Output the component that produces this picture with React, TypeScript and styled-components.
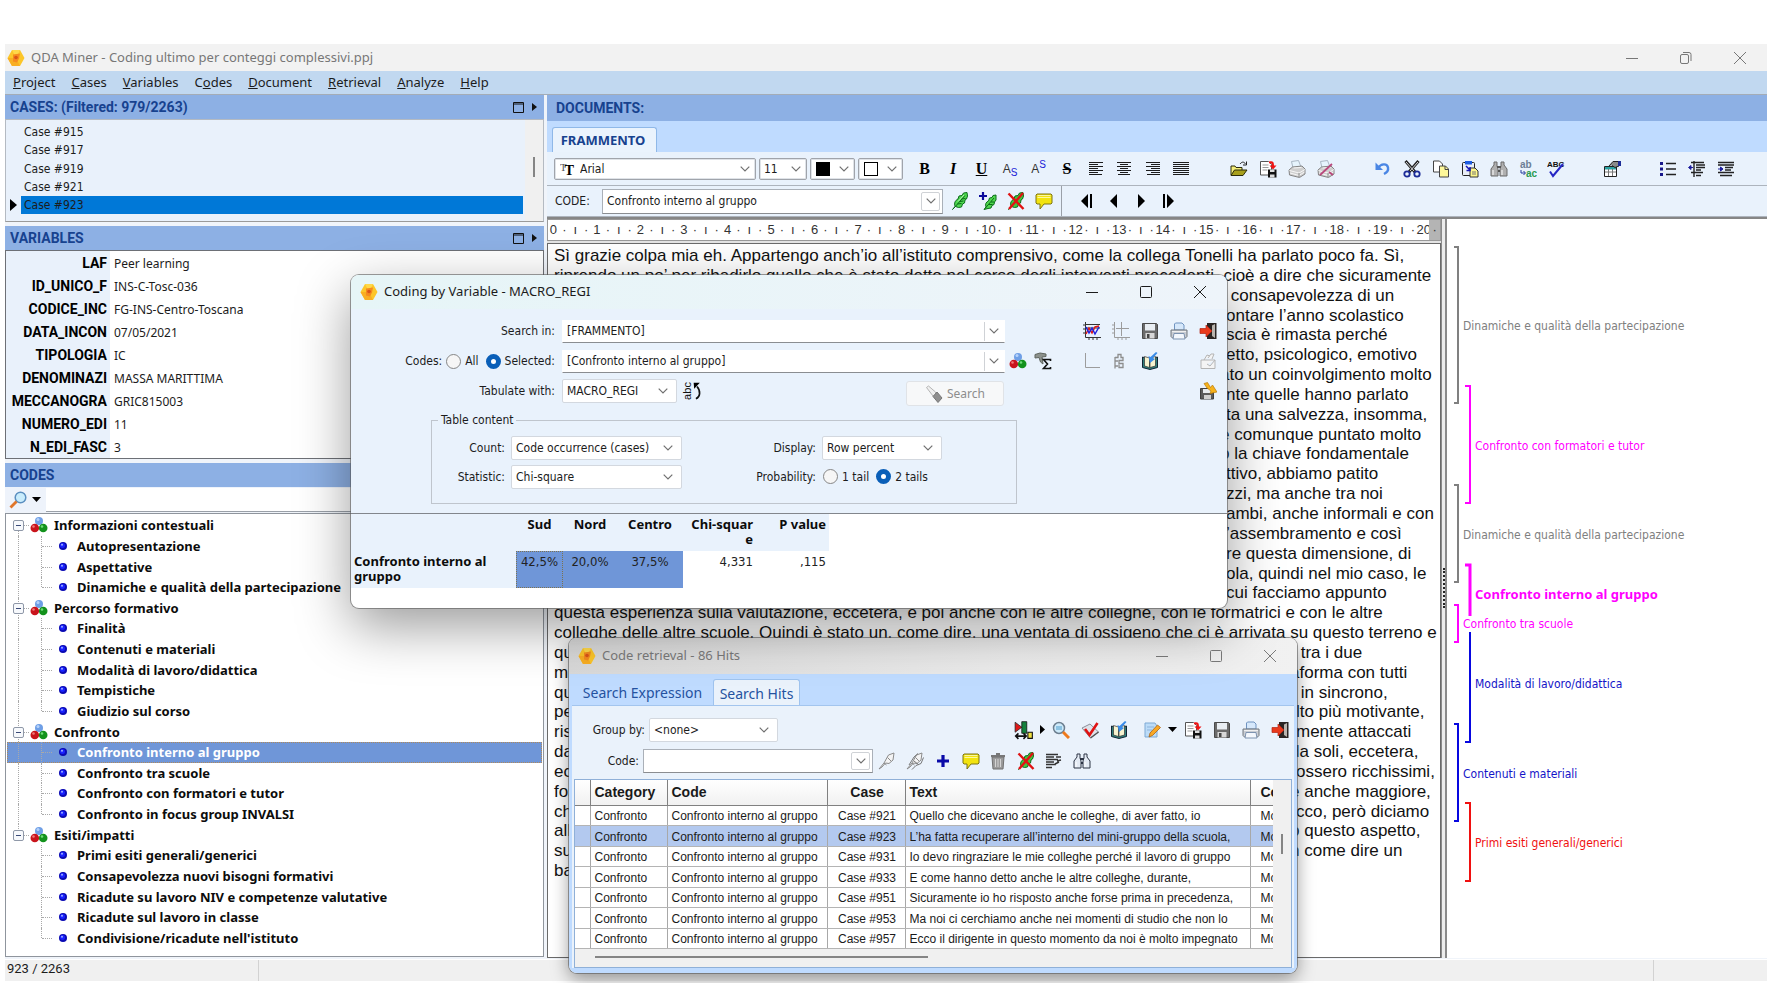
import React from 'react';
import styled, { createGlobalStyle, css } from 'styled-components';

const ui = '"DejaVu Sans Condensed", "DejaVu Sans", sans-serif';
const humanist = '"Noto Sans", "Open Sans", sans-serif';
const arial = '"Liberation Sans", Arial, sans-serif';
const grotesk = 'Roboto, "Liberation Sans", sans-serif';

const GlobalStyle = createGlobalStyle`
  * { box-sizing: border-box; }
  body { margin: 0; background: #fff; font: 12px/16px ${ui}; color: #1c1c1c; }
  button, input, select { font: inherit; color: inherit; margin: 0; }
  button { border: 0; padding: 0; background: none; }
  ul { list-style: none; margin: 0; padding: 0; }
`;

/* ---------- icons ---------- */

const Svg = ({ s = 18, children }: { s?: number; children: React.ReactNode }) => (
  <svg width={s} height={s} viewBox="0 0 18 18" fill="none" aria-hidden="true">{children}</svg>
);

const Logo = () => (
  <Svg>
    <path d="M5 1h8l4.500 8-4.500 8H5L.5 9z" fill="#fcc629" />
    <path d="M5 1h8l-4 8z" fill="#ffd84a" />
    <path d="M.5 9 5 17h8l-4-8z" fill="#f9ae22" />
    <path d="M6 5.500l7-1-1 5-2 4-4-1z" fill="#f58a1f" />
    <circle cx="9" cy="8.500" r="1.800" fill="#d9541a" />
  </Svg>
);
const Balls = () => (
  <Svg>
    <circle cx="9" cy="5" r="4" fill="#6f9fe6" /><circle cx="8" cy="3.500" r="1.500" fill="#b5d2fa" />
    <circle cx="4.800" cy="12" r="4.300" fill="#c9141c" /><circle cx="3.500" cy="10.500" r="1.300" fill="#f07a7a" />
    <circle cx="13.200" cy="12" r="4.300" fill="#13921c" /><circle cx="12" cy="10.500" r="1.300" fill="#6fdc78" />
  </Svg>
);
const Node = () => (
  <svg width="8" height="8" viewBox="0 0 8 8" aria-hidden="true">
    <circle cx="4" cy="4" r="4" fill="#0a0ab4" /><circle cx="3.500" cy="3.500" r="2.500" fill="#1a22ff" /><circle cx="3" cy="2.800" r="1" fill="#9fb0ff" />
  </svg>
);
const quill = 'M1.500 17.500 4 14.500C3 11 4 8.500 7 7l1-3 3-.500L12.500 1 16 .5l.5 3.500-1 3-1.500 1-.5 3-2 1-1 3-3 .5-3-1z';
const Feather = () => (
  <Svg>
    <path d={quill} fill="#4fd84f" stroke="#0b6d1a" />
    <path d="M3 16 14 3.500M6.500 12l4-.5M8.500 9.500l4-.5M10.500 7l4-.5" stroke="#0a6a18" />
    <path d="M7 9.500 13 3" stroke="#b6f5b0" />
  </Svg>
);
const FeatherPlus = () => (
  <Svg>
    <path d="M5 17.500 7 15c-1-3 0-5 2.500-6l1-3 2.500-.500L14 3.500l3-.5v5l-1.500 2-.5 2.500-2 1-1 2.500-3 .5z" fill="#4fd84f" stroke="#0b6d1a" />
    <path d="M6 16.500 15 6M10 12.500h3.500M12 10h3" stroke="#0a6a18" /><path d="M4 0v8M0 4h8" stroke="#0a0a9c" strokeWidth="2.200" />
  </Svg>
);
const FeatherX = () => (
  <Svg>
    <path d={quill} fill="#3fc83f" stroke="#0b6d1a" /><path d="M3 16 14 3.500" stroke="#0a6a18" />
    <path d="M1.500 1.500 16.500 17M16 1 2 17" stroke="#e01212" strokeWidth="2.400" />
  </Svg>
);
const Pen = ({ double }: { double?: boolean }) => (
  <Svg>
    <path d="M1 17l5-6 4.500-8L16 1l-1 7-4 3.500L7.500 11 4 15z" fill="#f4f4f4" stroke="#8b8b8b" />
    <path d="M9.500 5.500 13 9M6 11l2.500 2" stroke="#8b8b8b" />
    {double && <path d="M3 13l5-8 4-3.500M6 17.500l4-4 5-2 2.500-6M8 9l5 4" stroke="#777" />}
  </Svg>
);
const Bubble = () => (
  <Svg><path d="M2 2h14l1 1v8l-1 1H9l-4 5v-5H2l-1-1V3z" fill="#f2e30f" stroke="#7c7414" /><path d="M2.500 3.500h13M2.500 5.500h13" stroke="#fbf7a0" /></Svg>
);
const Align = ({ rows }: { rows: [number, number][] }) => (
  <Svg>{rows.map(([x, w], i) => <path key={i} d={`M${x} ${2.5 + i * 2}h${w}`} stroke="#1c1c1c" />)}</Svg>
);
const alignRows: Record<string, [number, number][]> = {
  left: [[2, 14], [2, 9], [2, 14], [2, 9], [2, 14], [2, 9], [2, 13]],
  center: [[2, 14], [5, 8], [2, 14], [5, 8], [2, 14], [5, 8], [3, 12]],
  right: [[2, 14], [7, 9], [2, 14], [7, 9], [2, 14], [7, 9], [3, 13]],
  justify: [[1, 16], [1, 16], [1, 16], [1, 16], [1, 16], [1, 16], [1, 16]],
};
const Open = () => (
  <Svg>
    <path d="M1 15V6h4l1 1.500h6V10" fill="#f4ee7a" stroke="#2b2b0a" />
    <path d="M1 15.500 4.500 10H17l-4 5.500z" fill="#a8a01c" stroke="#2b2b0a" /><path d="M10 4c2-2.500 4-2.500 5.500 0M16.500 1.500V5H13" stroke="#222" />
  </Svg>
);
const Export = () => (
  <Svg>
    <path d="M1.500 1.500h8l3 3V15h-11z" fill="#fff" stroke="#555" /><path d="M3.500 5h6M3.500 7.500h6M3.500 10h5" stroke="#999" />
    <path d="M10 1.500c4-1 5 .5 5 4h2.500L14 9.500 10.500 5.500H13c0-2-1-2.500-3-2z" fill="#f01414" />
    <path d="M9 9.500h8.500v8H9z" fill="#111" /><path d="M11 9.500h4.500V12H11zM11 14.500h4.500v3H11z" fill="#ddd" />
  </Svg>
);
const Printer = ({ blue, crossed }: { blue?: boolean; crossed?: boolean }) => (
  <Svg>
    {blue ? (
      <>
        <path d="M4.500 8V2l1-1H12l2 2v5z" fill="#d6e8fb" stroke="#6f93c0" />
        <path d="M1 8h16v6.500l-1.500 1.500h-13L1 14.500z" fill="#c9cdd3" stroke="#73787f" />
        <path d="M4 11.500h10L15 17H3z" fill="#f3f7fc" stroke="#7d93b0" /><path d="M2 9.500h14" stroke="#f0f0f0" />
      </>
    ) : (
      <>
        <path d="M5 8 3.500 1.500 10.500.5 13 7z" fill="#e6f4fd" stroke="#a9b7c4" />
        <path d="M1 10 4.500 7 14 6l3 3v5l-5.500 3.500L1.500 15z" fill="#cfcfcf" stroke="#858585" />
        <path d="M1.500 10.500 11 13l6-3.500M2 13l9 2.500L16.500 12M5.500 8l8-.5" stroke="#f7f7f7" /><path d="M11 13v4" stroke="#8a8a8a" />
      </>
    )}
    {crossed && <path d="M3 15 15 4M12 12l4 3" stroke="#b8487c" strokeWidth="1.800" />}
  </Svg>
);
const Undo = () => (
  <Svg>
    <path d="M4 8C7 3.500 13 3 14 7.500c.6 3-1 5-4 6.500" stroke="#4a86e4" strokeWidth="2.400" /><path d="M1.500 2.500V10H9z" fill="#4a86e4" />
  </Svg>
);
const Scissors = () => (
  <Svg>
    <path d="M2.500 1 12 12M15.500 1 6 12" stroke="#222" strokeWidth="3" /><path d="M3 2l8 9M15 2l-8 9" stroke="#d6d6d6" />
    <circle cx="4" cy="14" r="2.700" stroke="#1c2c98" strokeWidth="1.800" /><circle cx="14" cy="14" r="2.700" stroke="#1c2c98" strokeWidth="1.800" />
  </Svg>
);
const Copy = () => (
  <Svg>
    <path d="M1.500 1h6l3 3v8h-9z" fill="#fff" stroke="#444" /><path d="M7.500 6h6l3 3v8h-9z" fill="#fdf89a" stroke="#444" /><path d="M13 6v3.500h3.500" stroke="#444" />
  </Svg>
);
const Paste = () => (
  <Svg>
    <rect x="1.500" y="2.500" width="12" height="13" rx="1" fill="#e9eef6" stroke="#222" /><path d="M4 1h7v3.500H4z" fill="#1d5ce0" />
    <path d="M9 8h5l3 3v6H9z" fill="#fdf78a" stroke="#333" /><path d="M5 6l4 4M9 7v3.500H5.500" stroke="#1212b4" strokeWidth="1.500" /><path d="M11 12h4M11 14h4" stroke="#777" />
  </Svg>
);
const Binoculars = ({ dark }: { dark?: boolean }) => (
  <Svg>
    <path d="M4 2h3v4l1 3v7H1V9l3-4zM14 2h-3v4l-1 3v7h7V9l-3-4z" fill={dark ? '#e4ebf4' : '#b0b0b0'} stroke={dark ? '#2c3444' : '#6a6a6a'} />
    <path d="M3 10v5M12 10v5" stroke="#fff" /><path d="M7 7h4M8 11h2" stroke={dark ? '#2c3444' : '#555'} strokeWidth="2" />
  </Svg>
);
const glyph = { fontFamily: 'Liberation Sans', fontWeight: 700 } as const;
const Replace = () => (
  <Svg>
    <text x="1" y="8" fontSize="10" fill="#6d7f96" {...glyph}>ab</text><path d="M2 10v3h4M4.500 11l2 2-2 2" stroke="#22389c" />
    <text x="7" y="17" fontSize="10" fill="#2a9a50" {...glyph}>ac</text>
  </Svg>
);
const Spell = () => (
  <Svg>
    <text x="0" y="7" fontSize="8" fill="#111" {...glyph}>ABC</text><path d="M3 11.500 6 16 16 4" stroke="#2626c4" strokeWidth="2" />
  </Svg>
);
const Props = () => (
  <Svg>
    <path d="M1.500 6.500h12v10h-12z" fill="#fff" stroke="#222" /><path d="M2 7h11v2.500H2z" fill="#2aa0a0" /><path d="M2 12h11M5.500 9v7M9.500 9v7" stroke="#777" />
    <path d="M6 6l4-4.500h6V6l-4 1.500-3-2" fill="#8a8a8a" stroke="#222" /><path d="M15 1h3v5h-3z" fill="#1c2c98" />
  </Svg>
);
const Bullets = () => (
  <Svg><path d="M1 2h3v3H1zM1 7.500h3v3H1zM1 13h3v3H1z" fill="#18188c" /><path d="M7 3.500h10M7 9h10M7 14.500h10" stroke="#222" strokeWidth="1.300" /></Svg>
);
const Dent = ({ inward }: { inward?: boolean }) => (
  <Svg>
    <path d={inward ? 'M1 2.500h16M1 5h16M8 7.500h8M8 10h6M1 12.500h16M3 15.500h12' : 'M3 2.500h13M8 5h9M8 7.500h9M8 10h5M3 12.500h12M8 15.500h5M6 1v16'} stroke="#222" strokeWidth="1.400" />
    <path d={inward ? 'M1 9h3M3.500 7l2.500 2-2.500 2z' : 'M1 7.500h4M3 5.500.5 7.500l2.500 2z'} stroke="#1c1c9c" fill="#1c1c9c" />
  </Svg>
);
const Nav = ({ d }: { d: string }) => <Svg><path d={d} fill="#000" /></Svg>;
const Caret = () => <svg width="9" height="5" viewBox="0 0 9 5" aria-hidden="true"><path d="M0 0h9L4.500 5z" fill="#000" /></svg>;
const RightCaret = () => <svg width="5" height="9" viewBox="0 0 5 9" aria-hidden="true"><path d="M0 0v9l5-4.500z" fill="#000" /></svg>;
const Chevron = () => <svg width="10" height="6" viewBox="0 0 10 6" fill="none" aria-hidden="true"><path d="M.7.7 5 5 9.300.7" stroke="#707070" strokeWidth="1.200" /></svg>;
const Chart = () => (
  <Svg>
    <path d="M2.500 0v15.500H18M0 3h2M0 7h2M0 11h2M6 16v2M10 16v2M14 16v2M3 2.500h14M3 6h14" stroke="#333" />
    <path d="M3 12l3-6 3 5 3-6 4-1" stroke="#e01818" strokeWidth="1.500" /><path d="M3 5l3 6 3-5 3 6 4-7" stroke="#2222dc" strokeWidth="1.500" />
  </Svg>
);
const Axes = () => <Svg><path d="M2.500 0v15.500H18M0 3h2M0 7h2M0 11h2M6 16v2M10 16v2M14 16v2M4 6.500h13M9.500 0v14" stroke="#9c9c9c" /></Svg>;
const Corner = () => <Svg><path d="M2.500 1v14.500H17" stroke="#9c9c9c" /></Svg>;
const Dendro = () => <Svg><path d="M5 16.500V5M5 5.500h3v-3h3v3h2v3H9v3h4v4H9v-3M5 9h3M5 14h3" stroke="#8d8d8d" strokeWidth="1.300" /></Svg>;
const Disk = () => (
  <Svg>
    <path d="M1.500 1.500h14l1 1v14h-15z" fill="#6b6b6b" stroke="#4a4a4a" /><path d="M4 2h10v6.500H4z" fill="#e9eef3" /><path d="M4.500 11h9v5.500h-9z" fill="#d7d7d7" /><path d="M6 12h2.500v4H6z" fill="#444" />
  </Svg>
);
const Exit = () => (
  <Svg>
    <path d="M8 1h9.500v16H8z" fill="#2a2422" /><path d="M13 3.500l3-1.500v14L13 14z" fill="#b9b4ae" />
    <path d="M1 6.500h6V3l6 6-6 6v-3.500H1z" fill="#e93a1c" stroke="#b32412" strokeWidth=".7" />
  </Svg>
);
const Book = () => (
  <Svg>
    <path d="M1.500 5 8 7l8.500-2v10.500L9 17.500l-7.500-2z" fill="#2f7f7a" stroke="#123" /><path d="M3.500 4.500 8.500 6v9.500l-5-1.500zM9 6l5.500-1.500V14L9 15.500z" fill="#f7f3cf" stroke="#333" strokeWidth=".7" />
    <path d="M15 0 9.500 5l-2-1 1.500 7 5-4-2-1L16.500 1z" fill="#3a8ce8" />
  </Svg>
);
const Report = () => (
  <Svg><path d="M2 8h14v8.500H2zM5 8l3-5 3 1M9 6l3-4h3l-2 5M8 12l3 2 5-6" fill="#f4f4f4" stroke="#b4b4b4" /></Svg>
);
const DiskGo = () => (
  <Svg>
    <path d="M1.500 6.500h13v10.500h-13z" fill="#5b5b5b" stroke="#3f3f3f" /><path d="M4 7h8v4H4z" fill="#e8ecf0" /><path d="M5 13h7v4H5z" fill="#d0d0d0" />
    <path d="M5 1.500 8.500.500l3 5 2-2.500 4.500 7-7 1.500 1-2.500-4-3z" fill="#f6b21c" stroke="#b87a08" strokeWidth=".7" />
  </Svg>
);
const Sigma = () => (
  <Svg>
    <path d="M1 2.500 6 1l6 1v2.500L8 5l1 7-2.500-2L5 5.500 1 6z" fill="#8c918c" stroke="#5f655f" /><path d="M16.500 9V7.500H9.500l4 4.500-4 4.500h7V15" stroke="#111" strokeWidth="1.600" />
  </Svg>
);
const Rotate = () => (
  <Svg s={20}>
    <text transform="translate(8 17) rotate(-90)" fontSize="10" fill="#111" fontFamily="Liberation Sans">abc</text>
    <path d="M12.500 16c4-1.500 4.500-7 1-11" stroke="#111" strokeWidth="1.500" /><path d="M10.500 1.500h5.500l-5 5.500z" fill="#000" />
  </Svg>
);
const Torch = () => (
  <Svg><path d="M1.500 2.500 3.500 1l7 6 .5 4-3 0z" fill="#f0f0f0" stroke="#b4b4b4" /><path d="M8 11.500 12 7l5 6-4 4.500z" fill="#8f8f8f" stroke="#777" /></Svg>
);
const Filter = () => (
  <Svg s={20}>
    <path d="M1 2l6 4.500L1 11z" fill="#e01818" stroke="#222" strokeWidth=".7" /><path d="M7 1.500h4.500V12H7z" fill="#14803c" stroke="#111" strokeWidth=".7" />
    <path d="M2 14.500h8M4 12l-2.500 2.500L4 17M8.500 12l2.500 2.500L8.500 17" stroke="#111" strokeWidth="1.400" /><path d="M12.500 11h4v5.500h-4z" fill="#f0e040" stroke="#111" />
  </Svg>
);
const Lens = () => (
  <Svg>
    <circle cx="7" cy="7" r="5.500" fill="#cdeafa" stroke="#6d7f90" strokeWidth="1.500" /><path d="M4 6h6M4 8h6" stroke="#4a9ccc" /><path d="M11 11l6 6" stroke="#ee7a1c" strokeWidth="3" />
  </Svg>
);
const LensLeft = () => (
  <Svg><circle cx="11.500" cy="6.500" r="5.300" fill="#c9ecfc" stroke="#5b8fc0" strokeWidth="1.500" /><path d="M7.500 10.500 1.500 16.500" stroke="#e0762c" strokeWidth="2.800" /></Svg>
);
const Check = () => (
  <Svg>
    <path d="M1 7l8-4 8.500 8-8 6z" fill="#dfe2ea" stroke="#8b8f99" /><path d="M9.500 17l8-6" stroke="#555" strokeWidth="1.500" /><path d="M4 8l4.500 6L16.500 2" stroke="#e01212" strokeWidth="2.600" />
  </Svg>
);
const Edit = () => (
  <Svg>
    <path d="M2 2h10l2 3v11H2z" fill="#bcdcf8" stroke="#7faad4" /><path d="M4 6h7M4 9h5" stroke="#8db4dc" /><path d="M6 16l1-4 7.500-8 3 2.500-8 8z" fill="#f9a825" stroke="#a8661a" strokeWidth=".8" />
  </Svg>
);
const Trash = () => (
  <Svg><path d="M3 5h12l-1 12H4z" fill="#9b9b9b" stroke="#6f6f6f" /><path d="M2 4h14M7 2h4" stroke="#777" strokeWidth="2" /><path d="M6.500 7v8M9 7v8M11.500 7v8" stroke="#d4d4d4" /></Svg>
);
const Lines = () => (
  <Svg><path d="M1 2.500h12M1 5h8M1 7.500h12M1 10h8M1 12.500h10M1 15.500h6M11 5h5M12 9l4-1M10 12l4-2" stroke="#333" strokeWidth="1.500" /></Svg>
);
const Plus = () => <Svg><path d="M9 3v12M3 9h12" stroke="#0a0aa8" strokeWidth="3.200" /></Svg>;

/* ---------- shared pieces ---------- */

const CaptionBar = styled.header<{ $bg: string; $fg: string; $h: number; $inset: number }>`
  display: flex; align-items: center; height: ${p => p.$h}px; flex: none;
  padding-left: ${p => p.$inset}px; background: ${p => p.$bg}; color: ${p => p.$fg};
  font: 13px/18px ${humanist};
`;
const CaptionText = styled.span`flex: 1; padding: 0 0 2px 6px;`;
const CaptionButton = styled.button`
  width: 54px; height: 100%; display: grid; place-items: center; color: inherit;
`;
const WindowButtons = ({ restore }: { restore?: boolean }) => (
  <>
    <CaptionButton aria-label="Minimize"><svg width="12" height="12" stroke="currentColor"><path d="M0 6.500h12" /></svg></CaptionButton>
    <CaptionButton aria-label="Maximize">
      <svg width="12" height="12" stroke="currentColor" fill="none">
        {restore ? <><rect x=".5" y="2.500" width="8" height="9" rx="1.500" /><path d="M3 .5h6a2 2 0 0 1 2 2V9" /></> : <rect x=".5" y=".5" width="11" height="11" rx="1" />}
      </svg>
    </CaptionButton>
    <CaptionButton aria-label="Close"><svg width="12" height="12" stroke="currentColor"><path d="M0 0l12 12M12 0 0 12" /></svg></CaptionButton>
  </>
);
const IconButton = styled.button<{ $w?: number }>`
  flex: 0 0 ${p => p.$w ?? 29}px; height: 22px; display: grid; place-items: center;
`;
const SelectBox = styled.div<{ $w?: number; $h?: number; $framed?: boolean }>`
  position: relative; display: flex; align-items: center; height: ${p => p.$h ?? 24}px; min-width: 0;
  flex: ${p => (p.$w ? `0 0 ${p.$w}px` : '1')};
  background: #fff; border: 1px solid ${p => (p.$framed ? '#a0a4ab' : '#d3d8df')}; border-radius: 2px;
  ${p => p.$framed && css`box-shadow: inset 0 0 0 1px #dfe3e8;`}
  & > svg:last-child { position: absolute; right: ${p => (p.$framed ? 5 : 8)}px; pointer-events: none; }
`;
const SelectInput = styled.select`
  appearance: none; border: 0; background: transparent; flex: 1; min-width: 0; height: 100%; padding: 0 0 0 4px; outline: 0;
`;
const LeadIcon = styled.span`padding-left: 5px; display: flex; flex: none;`;
type PickProps = { label?: string; id?: string; value: string; w?: number; h?: number; framed?: boolean; lead?: React.ReactNode };
const Pick = ({ label, id, value, w, h, framed, lead }: PickProps) => (
  <SelectBox $w={w} $h={h} $framed={framed}>
    {lead && <LeadIcon>{lead}</LeadIcon>}
    <SelectInput id={id} aria-label={label}><option>{value}</option></SelectInput>
    <Chevron />
  </SelectBox>
);
const FieldBox = styled.div<{ $w: number; $h?: number; $boxed?: boolean }>`
  display: flex; flex: 0 0 ${p => p.$w}px; height: ${p => p.$h ?? 23}px; background: #fff;
  border: 1px solid ${p => (p.$boxed ? '#aab0b8' : '#fff')}; border-bottom-color: #8a8d91;
`;
const FieldInput = styled.input`flex: 1; min-width: 0; border: 0; padding: 0 4px; background: transparent; outline: 0;`;
const FieldDrop = styled.button<{ $boxed?: boolean }>`
  width: 19px; margin: 1px; display: grid; place-items: center; border-left: 1px solid #cfd2d6;
  ${p => p.$boxed && css`border: 1px solid #cfd2d6; border-radius: 2px; margin: 2px;`}
`;
const Combo = ({ id, value, w, h, boxed }: { id: string; value: string; w: number; h?: number; boxed?: boolean }) => (
  <FieldBox $w={w} $h={h} $boxed={boxed}>
    <FieldInput id={id} defaultValue={value} />
    <FieldDrop $boxed={boxed} type="button" aria-label="Show list"><Chevron /></FieldDrop>
  </FieldBox>
);
const RadioLabel = styled.label<{ $gap?: number }>`display: flex; align-items: center; gap: 4px; margin-left: ${p => p.$gap ?? 0}px;`;
const Radio = styled.input.attrs({ type: 'radio' })`
  appearance: none; width: 15px; height: 15px; margin: 0; border-radius: 50%; border: 1px solid #868686; background: #f6f6f6;
  &:checked { border: 5px solid #0a5fb8; background: #fff; }
`;

/* ---------- application frame ---------- */

const Page = styled.div`
  position: relative; display: flex; flex-direction: column; min-height: 100vh; min-width: 1300px; padding: 44px 5px 2px;
`;
const MenuBar = styled.nav`
  display: flex; gap: 16px; height: 24px; flex: none; padding-left: 8px; background: #c1d8f0; border-bottom: 1px solid #a4acb6;
`;
const MenuItem = styled.button`padding-bottom: 2px; font: 13px/20px ${humanist};`;
const Workspace = styled.main`
  flex: 1; display: grid; grid-template-columns: minmax(0, 539fr) 3px minmax(0, 1220fr); background: #f0f4fa;
`;
const Sidebar = styled.div`display: flex; flex-direction: column; gap: 4px; padding-bottom: 2px;`;
const Panel = styled.section<{ $grow?: boolean }>`
  display: flex; flex-direction: column; flex: ${p => (p.$grow ? '1' : 'none')};
`;
const PanelHead = styled.h2<{ $wide?: boolean }>`
  margin: 0; display: flex; align-items: center; flex: none;
  height: ${p => (p.$wide ? 26 : 24)}px; padding: 0 3px 0 ${p => (p.$wide ? 9 : 5)}px;
  background: #8db0e4; color: #17428f; font: 700 14px/18px ${grotesk};
`;
const HeadTools = styled.span`margin-left: auto; display: flex; align-items: center; gap: 3px;`;
const HeadButton = styled.button`display: grid; place-items: center; width: 13px; height: 16px;`;
const PanelTools = () => (
  <HeadTools>
    <HeadButton aria-label="Expand panel"><svg width="11" height="11" fill="none"><path d="M.5.500h10v10H.5zM0 2h11" stroke="#111" /></svg></HeadButton>
    <HeadButton aria-label="Panel menu"><svg width="5" height="8"><path d="M0 0v8l5-4z" fill="#111" /></svg></HeadButton>
  </HeadTools>
);
const ScrollTrack = styled.div<{ $top: number; $len: number }>`
  flex: 0 0 18px; background: #f0f0f0; display: flex; justify-content: center;
  &::after { content: ''; width: 2px; height: ${p => p.$len}px; margin-top: ${p => p.$top}px; background: #858585; }
`;

const CaseBox = styled.div`display: flex; height: 103px; background: #e9f1fb; border: 1px solid #b4bac2; border-bottom-color: #9a9a9a;`;
const CaseList = styled.ul`flex: 1; display: flex; flex-direction: column; padding: 3px 2px 7px 0;`;
const CaseItem = styled.li<{ $on?: boolean }>`
  flex: 1; display: flex; align-items: center; margin-left: 15px; padding-left: 3px; position: relative;
  ${p => p.$on && css`
    background: #0078d7;
    &::before { content: ''; position: absolute; left: -11px; border: 6px solid transparent; border-left: 7px solid #000; border-right: 0; }
  `}
`;

const VariableGrid = styled.dl`
  margin: 0; border: 1px solid #6d7076; display: grid; grid-template-columns: 104px 1fr; grid-auto-rows: 23px; background: #fff;
`;
const VarName = styled.dt`background: #e9f1fb; color: #000; text-align: right; padding-right: 3px; font: 700 14px/24px ${grotesk};`;
const VarValue = styled.dd`margin: 0; padding-left: 4px; font: 12px/25px ${humanist};`;

const CodeSearch = styled.div`display: flex; align-items: center; height: 25px; background: #eef3fb; padding-left: 2px;`;
const CodeSearchInput = styled.input`
  flex: 1; height: 24px; margin-left: 3px; border: 0; border-bottom: 1px solid #9aa0a8; background: #fff;
`;
const Tree = styled.ul`
  flex: 1; display: flex; flex-direction: column; margin-top: 1px; padding: 1px 0 8px 1px;
  border: 1px solid #8f959d; background: #fff; font: 700 13px/18px ${humanist}; color: #0c0c0c;
`;
const TreeItem = styled.li<{ $on?: boolean }>`
  flex: 1; display: flex; align-items: center; margin-right: 1px;
  ${p => p.$on && css`background: #6f96d8; color: #fff; outline: 1px dotted #b08a5a; outline-offset: -1px;`}
`;
const Rail = styled.span<{ $from?: string; $to?: string; $stub?: boolean }>`
  align-self: stretch; position: relative; flex: 0 0 23px;
  &::before {
    content: ''; position: absolute; left: 11px; top: ${p => p.$from ?? '0'}; bottom: ${p => p.$to ?? '0'};
    border-left: 1px dotted #a9a9a9; display: ${p => (p.$from || p.$to ? 'block' : 'none')};
  }
  &::after {
    content: ''; position: absolute; left: 12px; width: 10px; top: 50%; border-top: 1px dotted #a9a9a9;
    display: ${p => (p.$stub ? 'block' : 'none')};
  }
`;
const Toggle = styled.button`
  position: absolute; z-index: 1; left: 6px; top: calc(50% - 5px); width: 11px; height: 11px;
  border: 1px solid #8f98a8; border-radius: 2px; background: #f7f9fc;
  &::after { content: ''; position: absolute; left: 2px; right: 2px; top: 4px; height: 1px; background: #3a4a78; }
`;
const TreeText = styled.span<{ $gap: number }>`padding-left: ${p => p.$gap}px;`;
const NodeSlot = styled.span`display: flex; padding-left: 6px;`;

/* ---------- document pane ---------- */

const Documents = styled.div`grid-column: 3; display: flex; flex-direction: column;`;
const TabStrip = styled.div`display: flex; align-items: flex-end; height: 31px; flex: none; padding-left: 5px; background: #bfdbff;`;
const DocTab = styled.button`
  height: 25px; width: 105px; border: 1px solid #8fb8e8; border-bottom: 0; border-radius: 3px 3px 0 0; padding-right: 3px;
  background: #eaf3fd; color: #17428f; font: 700 13px/20px ${humanist};
`;
const ToolRow = styled.div<{ $h: number }>`
  display: flex; align-items: center; gap: 3px; flex: none; height: ${p => p.$h}px; padding-left: 7px;
  background: #e9f2fc; border-bottom: 1px solid #adb4bd;
`;
const ToolGroup = styled.div<{ $gap?: number }>`display: flex; margin-left: ${p => p.$gap ?? 0}px;`;
const Glyph = styled.span<{ $italic?: boolean; $line?: string }>`
  font: ${p => (p.$italic ? 'italic ' : '')}700 16px/18px "Liberation Serif", serif; color: #000;
  text-decoration: ${p => p.$line ?? 'none'};
`;
const Script = styled.span`
  font: 12px/18px "Liberation Sans", sans-serif; color: #333;
  sub, sup { font-size: 10px; line-height: 0; color: #2020d8; }
`;
const Swatch = styled.span<{ $fill: string }>`width: 14px; height: 14px; background: ${p => p.$fill}; border: 1px solid #000;`;
const CodeTag = styled.label`width: 45px; padding-left: 1px;`;
const Divider = styled.span`align-self: stretch; width: 1px; background: #9aa0a8;`;

const Body = styled.div`
  flex: 1; display: grid; grid-template-columns: minmax(0, 894fr) 6px minmax(0, 320fr);
  border-top: 2px solid #868686; margin-bottom: 1px;
`;
const Editor = styled.div`display: flex; flex-direction: column; background: #e4e4e4;`;
const Ruler = styled.div`
  display: flex; height: 22px; flex: none; background: #fff; border: 1px solid #999; font: 13px/20px ${arial}; color: #333;
`;
const RulerUnit = styled.span<{ $last?: boolean }>`
  flex: ${p => (p.$last ? 2 : 4)} 1 0; display: grid; grid-template-columns: repeat(${p => (p.$last ? 2 : 4)}, 1fr);
`;
const RulerMark = styled.span<{ $edge?: boolean }>`
  display: flex; justify-content: center; min-width: 0; ${p => p.$edge && css`background: #b4b4b4;`}
`;
const Sheet = styled.div`
  flex: 1; display: flex; flex-direction: column; margin-top: 2px; padding: 2px 0 76px 6px;
  background: #fff; border: 1px solid #6a6a6a; overflow: hidden;
  font: 17px/19px ${arial}; color: #111; white-space: pre;
`;
const Line = styled.div`display: flex; flex: 1;`;
const Lead = styled.span<{ $w: number; $tuck?: boolean }>`flex: 0 0 ${p => p.$w - (p.$tuck ? 6 : 0)}px;`;
const Splitter = styled.div`
  display: flex; align-items: center; justify-content: center; background: #ececec;
  border-left: 1px solid #8a8a8a; border-right: 2px solid #8a8a8a;
  &::after { content: ''; height: 40px; margin-bottom: 2px; border-left: 2px dotted #222; }
`;
const Margin = styled.div`position: relative; background: #fff;`;
const Brackets = styled.svg`position: absolute; left: 0; top: 0; width: 100%; height: 100%;`;
const MarginLabel = styled.span<{ $x: number; $y: number; $c: string; $bold?: boolean }>`
  position: absolute; left: ${p => p.$x}px; top: ${p => p.$y - 8}px; color: ${p => p.$c}; white-space: nowrap; background: #fff;
  ${p => p.$bold && css`font: 700 13px/16px ${humanist};`}
`;
const StatusBar = styled.footer`
  display: flex; height: 22px; flex: none; background: #f0f0f0; border-top: 1px solid #fff; font: 13px/18px ${grotesk};
`;
const StatusCell = styled.span<{ $grow: number }>`
  flex: ${p => p.$grow} 1 0; padding-left: 2px; & + & { border-left: 1px solid #d2d2d2; }
`;

/* ---------- floating windows ---------- */

const Floating = styled.section<{ $x: number; $y: number; $w: number; $h: number; $z: number }>`
  position: absolute; left: ${p => p.$x}px; top: ${p => p.$y}px; width: ${p => p.$w}px; height: ${p => p.$h}px; z-index: ${p => p.$z};
  display: flex; flex-direction: column; overflow: hidden; border-radius: 8px; background: #fff;
  box-shadow: 0 0 0 1px rgba(90, 90, 90, 0.6), 0 ${p => p.$z * 6}px ${p => p.$z * 18}px rgba(0, 0, 0, 0.4);
`;
const CodingForm = styled.form`flex: none; height: 205px; padding-top: 7px; background: #e9f2fc; border-bottom: 1px solid #82868c;`;
const FormRow = styled.div`display: flex; align-items: center; height: 30px; padding-right: 5px;`;
const FormLead = styled.div`flex: 0 0 204px; margin-right: 7px; display: flex; justify-content: flex-end; align-items: center; gap: 7px;`;
const Spacer = styled.span`flex: 1;`;
const Blank = styled.span<{ $w: number }>`flex: 0 0 ${p => p.$w}px;`;
const SearchButton = styled.button`
  display: flex; align-items: center; justify-content: center; gap: 4px; width: 98px; height: 25px; margin-left: 200px;
  align-self: flex-end; background: #f7f8f9; border: 1px solid #e0e3e7; border-radius: 3px; color: #8d8d8d; font: 12px/16px ${humanist};
`;
const Content = styled.fieldset`
  margin: 6px 0 0 80px; padding: 5px 0 0; width: 586px; height: 92px; border: 1px solid #bfc5cd;
  legend { margin-left: 6px; padding: 0 3px; line-height: 16px; }
`;
const ContentRow = styled.div`display: flex; align-items: center; height: 29px;`;
const ContentLabel = styled.label<{ $w: number }>`flex: 0 0 ${p => p.$w}px; text-align: right; padding-right: 6px;`;
const CrossTable = styled.table`
  border-collapse: collapse; table-layout: fixed; width: 478px; color: #222;
  th { background: #e9f2fc; font: 700 13px/15px ${humanist}; color: #0c0c0c; vertical-align: top; padding: 3px 3px 0; }
  thead tr { height: 37px; }
  tbody tr { height: 37px; }
  tbody th { text-align: left; padding-left: 3px; }
  td { vertical-align: top; padding: 3px 3px 0; font: 13px/15px ${ui}; text-align: right; }
`;
const HeatCell = styled.td<{ $focus?: boolean }>`
  && { text-align: center; padding-left: 0; padding-right: 0; background: #6f96d8; }
  ${p => p.$focus && css`outline: 1px dotted #7d7250; outline-offset: -1px;`}
`;
const NumHead = styled.th`text-align: right;`;

const Frame = styled.div`flex: 1; min-height: 0; display: flex; flex-direction: column; background: #bfdbff; padding: 0 3px 5px;`;
const HitTabs = styled.div`display: flex; align-items: flex-end; height: 31px; flex: none;`;
const HitTab = styled.button<{ $on?: boolean; $w: number }>`
  width: ${p => p.$w}px; height: 26px; padding-top: 2px; color: #2552a0; font: 14px/20px ${humanist};
  ${p => p.$on && css`background: #eaf2fb; border: 1px solid #9fc3ee; border-bottom: 0; border-radius: 3px 3px 0 0;`}
`;
const HitBody = styled.div`flex: 1; min-height: 0; display: flex; flex-direction: column; background: #eaf2fb; padding: 8px 0 0; border-top: 1px solid #a3c5ee;`;
const HitRow = styled.div`display: flex; align-items: center; height: 31px;`;
const HitLabel = styled.label<{ $w: number }>`flex: 0 0 ${p => p.$w}px; text-align: right; padding-right: 4px;`;
const HitInput = styled.div`flex: 0 0 230px; display: flex;`;
const GridBox = styled.div`flex: 1; min-height: 0; display: flex; flex-direction: column; margin: 3px 2px 0 2px; border: 1px solid #8fb0d8; background: #f0f0f0;`;
const GridMain = styled.div`display: flex; height: 169px; overflow: hidden;`;
const GridClip = styled.div`flex: 1; min-width: 0; overflow: hidden; background: #fff;`;
const HitTable = styled.table`
  width: 100%; height: 169px; table-layout: fixed; border-collapse: collapse; font: 12px/16px ${arial}; color: #1a1a1a;
  th, td { text-align: left; white-space: nowrap; overflow: hidden; padding: 2px 0 0 4px; border-left: 1px solid #a8a8a8; border-bottom: 1px solid #b4b4b4; }
  th:first-child, td:first-child { border-left: 0; }
  thead tr { height: 25px; background: linear-gradient(#fff, #f1f1f1); }
  th { font-size: 14px; font-weight: 700; padding-top: 0; border-color: #808080; }
  th:nth-child(4), td:nth-child(4) { text-align: center; padding-left: 2px; }
  th:last-child, td:last-child { padding-left: 10px; }
`;
const HitLine = styled.tr<{ $on?: boolean }>`background: ${p => (p.$on ? '#b3c9ef' : '#fff')};`;
const HScroll = styled.div`flex: 1; display: flex; align-items: center; &::after { content: ''; width: 333px; height: 2px; margin: 0 0 2px 20px; background: #858585; }`;

/* ---------- data ---------- */

const menus: [string, string, string][] = [
  ['', 'P', 'roject'], ['', 'C', 'ases'], ['', 'V', 'ariables'], ['C', 'o', 'des'],
  ['', 'D', 'ocument'], ['', 'R', 'etrieval'], ['', 'A', 'nalyze'], ['', 'H', 'elp'],
];
const variables: [string, string][] = [
  ['LAF', 'Peer learning'], ['ID_UNICO_F', 'INS-C-Tosc-036'], ['CODICE_INC', 'FG-INS-Centro-Toscana'],
  ['DATA_INCON', '07/05/2021'], ['TIPOLOGIA', 'IC'], ['DENOMINAZI', 'MASSA MARITTIMA'],
  ['MECCANOGRA', 'GRIC815003'], ['NUMERO_EDI', '11'], ['N_EDI_FASC', '3'],
];
const codes: [string, string[]][] = [
  ['Informazioni contestuali', ['Autopresentazione', 'Aspettative', 'Dinamiche e qualità della partecipazione']],
  ['Percorso formativo', ['Finalità', 'Contenuti e materiali', 'Modalità di lavoro/didattica', 'Tempistiche', 'Giudizio sul corso']],
  ['Confronto', ['Confronto interno al gruppo', 'Confronto tra scuole', 'Confronto con formatori e tutor', 'Confronto in focus group INVALSI']],
  ['Esiti/impatti', ['Primi esiti generali/generici', 'Consapevolezza nuovi bisogni formativi', 'Ricadute su lavoro NIV e competenze valutative', 'Ricadute sul lavoro in classe', 'Condivisione/ricadute nell\'istituto']],
];
type TextLine = { lead?: string; at?: number; tail?: string; tuck?: boolean };
const TOP = 672;
const LOW = 742;
const lines: TextLine[] = [
  { lead: 'Sì grazie colpa mia eh. Appartengo anch’io all’istituto comprensivo, come la collega Tonelli ha parlato poco fa. Sì,' },
  { lead: 'riprendo un po’ per ribadirlo quello che è stato detto nel corso degli interventi precedenti, cioè a dire che sicuramente' },
  { at: TOP, tail: ' consapevolezza di un' },
  { at: TOP, tail: 'ontare l’anno scolastico' },
  { at: TOP, tail: 'scia è rimasta perché' },
  { at: TOP, tail: 'etto, psicologico, emotivo' },
  { at: TOP, tail: 'ato un coinvolgimento molto', tuck: true },
  { at: TOP, tail: 'nte quelle hanno parlato' },
  { at: TOP, tail: 'ta una salvezza, insomma,' },
  { at: TOP, tail: 'e comunque puntato molto', tuck: true },
  { at: TOP, tail: 'o la chiave fondamentale', tuck: true },
  { at: TOP, tail: 'ttivo, abbiamo patito' },
  { at: TOP, tail: 'zzi, ma anche tra noi' },
  { at: TOP, tail: 'ambi, anche informali e con' },
  { at: TOP, tail: '’assembramento e così' },
  { at: TOP, tail: 're questa dimensione, di' },
  { at: TOP, tail: 'ola, quindi nel mio caso, le' },
  { at: TOP, tail: 'cui facciamo appunto' },
  { lead: 'questa esperienza sulla valutazione, eccetera, e poi anche con le altre colleghe, con le formatrici e con le altre' },
  { lead: 'colleghe delle altre scuole. Quindi è stato un, come dire, una ventata di ossigeno che ci è arrivata su questo terreno e' },
  { lead: 'qu', at: LOW, tail: ' tra i due' },
  { lead: 'm', at: LOW, tail: 'aforma con tutti', tuck: true },
  { lead: 'qu', at: LOW, tail: ' in sincrono,' },
  { lead: 'pe', at: LOW, tail: 'lto più motivante,' },
  { lead: 'ris', at: LOW, tail: 'mente attaccati' },
  { lead: 'da', at: LOW, tail: 'da soli, eccetera,', tuck: true },
  { lead: 'ec', at: LOW, tail: 'ossero ricchissimi,' },
  { lead: 'fos', at: LOW, tail: 'e anche maggiore,', tuck: true },
  { lead: 'ch', at: LOW, tail: 'cco, però diciamo' },
  { lead: 'all', at: LOW, tail: 'o questo aspetto,', tuck: true },
  { lead: 'su', at: LOW, tail: 'n come dire un', tuck: true },
  { lead: 'ba' },
];
const GRAY = '#808080', PINK = '#ff00ff', BLUE = '#0808e0', RED = '#f01010';
const brackets: { d: string; c: string; w?: number }[] = [
  { d: 'M7 28h4v156H7', c: GRAY }, { d: 'M18 167h5v117h-5', c: PINK }, { d: 'M7 266h4v97H7', c: GRAY },
  { d: 'M23 413v110h-5', c: BLUE }, { d: 'M18 346h5v54', c: PINK, w: 3 }, { d: 'M7 386h4v37H7', c: PINK },
  { d: 'M7 505h4v97H7', c: BLUE }, { d: 'M18 584h5v78h-5', c: RED },
];
const notes: [string, number, number, string, boolean?][] = [
  ['Dinamiche e qualità della partecipazione', 16, 107, GRAY], ['Confronto con formatori e tutor', 28, 227, PINK],
  ['Dinamiche e qualità della partecipazione', 16, 316, GRAY], ['Confronto interno al gruppo', 28, 375, PINK, true],
  ['Confronto tra scuole', 16, 405, PINK], ['Modalità di lavoro/didattica', 28, 465, '#1414c8'],
  ['Contenuti e materiali', 16, 555, '#1414c8'], ['Primi esiti generali/generici', 28, 624, RED],
];
const hits: [string, string][] = [
  ['921', 'Quello che dicevano anche le colleghe, di aver fatto, io'],
  ['923', 'L’ha fatta recuperare all’interno del mini-gruppo della scuola,'],
  ['931', 'Io devo ringraziare le mie colleghe perché il lavoro di gruppo'],
  ['933', 'E come hanno detto anche le altre colleghe, durante,'],
  ['951', 'Sicuramente io ho risposto anche forse prima in precedenza,'],
  ['953', 'Ma noi ci cerchiamo anche nei momenti di studio che non lo'],
  ['957', 'Ecco il dirigente in questo momento da noi è molto impegnato'],
];

const IB = ({ label, w, children }: { label: string; w?: number; children: React.ReactNode }) => (
  <IconButton type="button" $w={w} aria-label={label}>{children}</IconButton>
);

/* ---------- sections ---------- */

const CodeTree = () => (
  <Tree>
    {codes.map(([group, items], g) => {
      const last = g === codes.length - 1;
      return (
        <React.Fragment key={group}>
          <TreeItem>
            <Rail $from={g === 0 ? '50%' : '0'} $to={last ? '50%' : '0'} $stub><Toggle aria-label={`Collapse ${group}`} /></Rail>
            <Balls />
            <TreeText $gap={6}>{group}</TreeText>
          </TreeItem>
          {items.map((item, i) => (
            <TreeItem key={item} $on={item === 'Confronto interno al gruppo'}>
              <Rail $from={last ? undefined : '0'} $to={last ? undefined : '0'} />
              <Rail $from="0" $to={i === items.length - 1 ? '50%' : '0'} $stub />
              <NodeSlot><Node /></NodeSlot>
              <TreeText $gap={10}>{item}</TreeText>
            </TreeItem>
          ))}
        </React.Fragment>
      );
    })}
  </Tree>
);

const LeftColumn = () => (
  <Sidebar>
    <Panel>
      <PanelHead>CASES: (Filtered: 979/2263)<PanelTools /></PanelHead>
      <CaseBox>
        <CaseList>{[915, 917, 919, 921, 923].map(n => <CaseItem key={n} $on={n === 923}>Case #{n}</CaseItem>)}</CaseList>
        <ScrollTrack $top={37} $len={20} />
      </CaseBox>
    </Panel>
    <Panel>
      <PanelHead>VARIABLES<PanelTools /></PanelHead>
      <VariableGrid>
        {variables.map(([k, v]) => <React.Fragment key={k}><VarName>{k}</VarName><VarValue>{v}</VarValue></React.Fragment>)}
      </VariableGrid>
    </Panel>
    <Panel $grow>
      <PanelHead>CODES</PanelHead>
      <CodeSearch>
        <IB label="Find code" w={22}><LensLeft /></IB>
        <IB label="Search options" w={14}><Caret /></IB>
        <CodeSearchInput aria-label="Search codes" />
      </CodeSearch>
      <CodeTree />
    </Panel>
  </Sidebar>
);

const FontMark = () => (
  <Svg s={16}>
    <text x="0" y="11" fontSize="12" fill="#555" fontFamily="Liberation Serif">T</text>
    <text x="5" y="16" fontSize="16" fontWeight="700" fill="#000" fontFamily="Liberation Serif">T</text>
  </Svg>
);

const FormatBar = () => (
  <ToolRow $h={34}>
    <Pick label="Font" value="Arial" w={202} h={22} framed lead={<FontMark />} />
    <Pick label="Size" value="11" w={48} h={22} framed />
    <Pick label="Text colour" value="" w={45} h={22} framed lead={<Swatch $fill="#000" />} />
    <Pick label="Background colour" value="" w={45} h={22} framed lead={<Swatch $fill="#fff" />} />
    <ToolGroup $gap={4}>
      <IB label="Bold"><Glyph>B</Glyph></IB>
      <IB label="Italic" w={28}><Glyph $italic>I</Glyph></IB>
      <IB label="Underline"><Glyph $line="underline">U</Glyph></IB>
      <IB label="Subscript" w={28}><Script>A<sub>S</sub></Script></IB>
      <IB label="Superscript"><Script>A<sup>S</sup></Script></IB>
      <IB label="Strikethrough" w={28}><Glyph $line="line-through">S</Glyph></IB>
      <IB label="Align left"><Align rows={alignRows.left} /></IB>
      <IB label="Center" w={28}><Align rows={alignRows.center} /></IB>
      <IB label="Align right"><Align rows={alignRows.right} /></IB>
      <IB label="Justify" w={28}><Align rows={alignRows.justify} /></IB>
    </ToolGroup>
    <ToolGroup $gap={26}>
      <IB label="Open"><Open /></IB>
      <IB label="Export"><Export /></IB>
      <IB label="Print"><Printer /></IB>
      <IB label="Printer setup"><Printer crossed /></IB>
    </ToolGroup>
    <ToolGroup $gap={25}>
      <IB label="Undo"><Undo /></IB>
      <IB label="Cut"><Scissors /></IB>
      <IB label="Copy"><Copy /></IB>
      <IB label="Paste"><Paste /></IB>
      <IB label="Find"><Binoculars /></IB>
      <IB label="Replace"><Replace /></IB>
      <IB label="Spelling" w={27}><Spell /></IB>
    </ToolGroup>
    <ToolGroup $gap={25}><IB label="Properties"><Props /></IB></ToolGroup>
    <ToolGroup $gap={24}>
      <IB label="Bullets"><Bullets /></IB>
      <IB label="Decrease indent"><Dent /></IB>
      <IB label="Increase indent"><Dent inward /></IB>
    </ToolGroup>
  </ToolRow>
);

const CodeBar = () => (
  <ToolRow $h={31}>
    <CodeTag htmlFor="code-name">CODE:</CodeTag>
    <Combo id="code-name" value="Confronto interno al gruppo" w={341} h={25} boxed />
    <ToolGroup>
      <IB label="Assign code" w={28}><Feather /></IB>
      <IB label="Add code" w={28}><FeatherPlus /></IB>
      <IB label="Remove code" w={28}><FeatherX /></IB>
      <IB label="Comment" w={28}><Bubble /></IB>
    </ToolGroup>
    <Divider />
    <ToolGroup $gap={8}>
      <IB label="First case" w={27}><Nav d="M10 2v14L3 9zM12 2h2v14h-2z" /></IB>
      <IB label="Previous case" w={27}><Nav d="M12 2v14L5 9z" /></IB>
      <IB label="Next case" w={27}><Nav d="M6 2v14l7-7z" /></IB>
      <IB label="Last case" w={27}><Nav d="M8 2v14l7-7zM4 2h2v14H4z" /></IB>
    </ToolGroup>
  </ToolRow>
);

const RulerBar = () => (
  <Ruler>
    {Array.from({ length: 20 }, (_, n) => (
      <RulerUnit key={n}><RulerMark>{n}</RulerMark><RulerMark>·</RulerMark><RulerMark>ı</RulerMark><RulerMark>·</RulerMark></RulerUnit>
    ))}
    <RulerUnit $last><RulerMark>20</RulerMark><RulerMark $edge>·</RulerMark></RulerUnit>
  </Ruler>
);

const RightColumn = () => (
  <Documents>
    <PanelHead $wide>DOCUMENTS:</PanelHead>
    <TabStrip><DocTab>FRAMMENTO</DocTab></TabStrip>
    <FormatBar />
    <CodeBar />
    <Body>
      <Editor>
        <RulerBar />
        <Sheet>
          {lines.map((l, i) => (
            <Line key={i}>{l.at ? <><Lead $w={l.at} $tuck={l.tuck}>{l.lead}</Lead><span>{l.tail}</span></> : l.lead}</Line>
          ))}
        </Sheet>
      </Editor>
      <Splitter />
      <Margin>
        <Brackets fill="none">{brackets.map((b, i) => <path key={i} d={b.d} stroke={b.c} strokeWidth={b.w ?? 2} />)}</Brackets>
        {notes.map(([t, x, y, c, bold]) => <MarginLabel key={t + y} $x={x} $y={y} $c={c} $bold={bold}>{t}</MarginLabel>)}
      </Margin>
    </Body>
  </Documents>
);

const CodingWindow = () => (
  <Floating $x={351} $y={275} $w={876} $h={333} $z={3} aria-label="Coding by Variable">
    <CaptionBar $bg="linear-gradient(90deg, #e6f5f7, #eef4fa)" $fg="#1b1b1b" $h={34} $inset={9}>
      <Logo /><CaptionText>Coding by Variable - MACRO_REGI</CaptionText><WindowButtons />
    </CaptionBar>
    <CodingForm onSubmit={e => e.preventDefault()}>
      <FormRow>
        <FormLead><label htmlFor="search-in">Search in:</label></FormLead>
        <Combo id="search-in" value="[FRAMMENTO]" w={443} />
        <Spacer />
        <IB label="Chart"><Chart /></IB>
        <IB label="Axes"><Axes /></IB>
        <IB label="Save table"><Disk /></IB>
        <IB label="Print table"><Printer blue /></IB>
        <IB label="Close table"><Exit /></IB>
      </FormRow>
      <FormRow>
        <FormLead>
          <RadioLabel>Codes:<Radio name="codes" aria-label="All" />All</RadioLabel>
          <RadioLabel><Radio name="codes" defaultChecked />Selected:</RadioLabel>
        </FormLead>
        <Combo id="selected-codes" value="[Confronto interno al gruppo]" w={443} />
        <IB label="Pick codes" w={25}><Balls /></IB>
        <IB label="Filter" w={25}><Sigma /></IB>
        <Spacer />
        <IB label="Plot"><Corner /></IB>
        <IB label="Dendrogram" w={25}><Dendro /></IB>
        <Blank $w={4} />
        <IB label="Save to report"><Book /></IB>
        <Blank $w={29} />
        <IB label="Open query"><Report /></IB>
      </FormRow>
      <FormRow>
        <FormLead><label htmlFor="tabulate">Tabulate with:</label></FormLead>
        <Pick id="tabulate" value="MACRO_REGI" w={115} />
        <IB label="Rotate labels"><Rotate /></IB>
        <SearchButton disabled><Torch />Search</SearchButton>
        <Spacer />
        <IB label="Save query"><DiskGo /></IB>
      </FormRow>
      <Content>
        <legend>Table content</legend>
        <ContentRow>
          <ContentLabel $w={79} htmlFor="count">Count:</ContentLabel>
          <Pick id="count" value="Code occurrence (cases)" w={171} />
          <ContentLabel $w={140} htmlFor="display">Display:</ContentLabel>
          <Pick id="display" value="Row percent" w={120} />
        </ContentRow>
        <ContentRow>
          <ContentLabel $w={79} htmlFor="statistic">Statistic:</ContentLabel>
          <Pick id="statistic" value="Chi-square" w={171} />
          <ContentLabel $w={140} as="span">Probability:</ContentLabel>
          <RadioLabel $gap={1}><Radio name="tails" />1 tail</RadioLabel>
          <RadioLabel $gap={7}><Radio name="tails" defaultChecked />2 tails</RadioLabel>
        </ContentRow>
      </Content>
    </CodingForm>
    <CrossTable>
      <colgroup>{[165, 47, 54, 66, 73, 73].map((w, i) => <col key={i} width={w} />)}</colgroup>
      <thead><tr><th /><th>Sud</th><th>Nord</th><th>Centro</th><NumHead>Chi-squar<br />e</NumHead><NumHead>P value</NumHead></tr></thead>
      <tbody>
        <tr><th>Confronto interno al gruppo</th><HeatCell $focus>42,5%</HeatCell><HeatCell>20,0%</HeatCell><HeatCell>37,5%</HeatCell><td>4,331</td><td>,115</td></tr>
      </tbody>
    </CrossTable>
  </Floating>
);

const RetrievalWindow = () => (
  <Floating $x={569} $y={638} $w={728} $h={335} $z={1} aria-label="Code retrieval">
    <CaptionBar $bg="linear-gradient(90deg, #d9d9d9, #ececec 60%, #f1f1f1)" $fg="#7a7a7a" $h={36} $inset={9}>
      <Logo /><CaptionText>Code retrieval - 86 Hits</CaptionText><WindowButtons />
    </CaptionBar>
    <Frame>
      <HitTabs><HitTab $w={141}>Search Expression</HitTab><HitTab $w={87} $on>Search Hits</HitTab></HitTabs>
      <HitBody>
        <HitRow>
          <HitLabel $w={77} htmlFor="group-by">Group by:</HitLabel>
          <Pick id="group-by" value="&lt;none&gt;" w={129} />
          <Spacer />
          <IB label="Filter hits" w={28}><Filter /></IB>
          <IB label="More filters" w={8}><RightCaret /></IB>
          <IB label="Search"><Lens /></IB>
          <IB label="Validate"><Check /></IB>
          <IB label="Report"><Book /></IB>
          <Blank $w={4} />
          <IB label="Edit"><Edit /></IB>
          <IB label="Edit options" w={12}><Caret /></IB>
          <IB label="Export hits"><Export /></IB>
          <IB label="Save hits"><Disk /></IB>
          <IB label="Print hits"><Printer blue /></IB>
          <IB label="Close hits"><Exit /></IB>
        </HitRow>
        <HitRow>
          <HitLabel $w={71} htmlFor="hit-code">Code:</HitLabel>
          <HitInput><Combo id="hit-code" value="" w={230} h={24} boxed /></HitInput>
          <IB label="Code hit" w={28}><Pen /></IB>
          <IB label="Code all hits" w={28}><Pen double /></IB>
          <IB label="Add" w={28}><Plus /></IB>
          <IB label="Comment hit" w={27}><Bubble /></IB>
          <IB label="Delete" w={28}><Trash /></IB>
          <IB label="Remove coding" w={28}><FeatherX /></IB>
          <IB label="Lines" w={28}><Lines /></IB>
          <IB label="Find in hits" w={28}><Binoculars dark /></IB>
        </HitRow>
        <GridBox>
          <GridMain>
            <GridClip>
              <HitTable>
                <colgroup>{[15, 77, 160, 78, 345, 23].map((w, i) => <col key={i} width={w} />)}</colgroup>
                <thead><tr><th /><th>Category</th><th>Code</th><th>Case</th><th>Text</th><th>Co</th></tr></thead>
                <tbody>
                  {hits.map(([n, text]) => (
                    <HitLine key={n} $on={n === '923'}>
                      <td /><td>Confronto</td><td>Confronto interno al gruppo</td><td>Case #{n}</td><td>{text}</td><td>Mo</td>
                    </HitLine>
                  ))}
                </tbody>
              </HitTable>
            </GridClip>
            <ScrollTrack $top={54} $len={20} />
          </GridMain>
          <HScroll />
        </GridBox>
      </HitBody>
    </Frame>
  </Floating>
);

export default function App() {
  return (
    <>
      <GlobalStyle />
      <Page>
        <CaptionBar $bg="#f2f2f2" $fg="#777" $h={27} $inset={2}>
          <Logo /><CaptionText>QDA Miner - Coding ultimo per conteggi complessivi.ppj</CaptionText><WindowButtons restore />
        </CaptionBar>
        <MenuBar>{menus.map(([a, k, b]) => <MenuItem key={k + b}>{a}<u>{k}</u>{b}</MenuItem>)}</MenuBar>
        <Workspace><LeftColumn /><RightColumn /></Workspace>
        <StatusBar><StatusCell $grow={252}>923 / 2263</StatusCell><StatusCell $grow={1398} /><StatusCell $grow={112} /></StatusBar>
        <CodingWindow />
        <RetrievalWindow />
      </Page>
    </>
  );
}
